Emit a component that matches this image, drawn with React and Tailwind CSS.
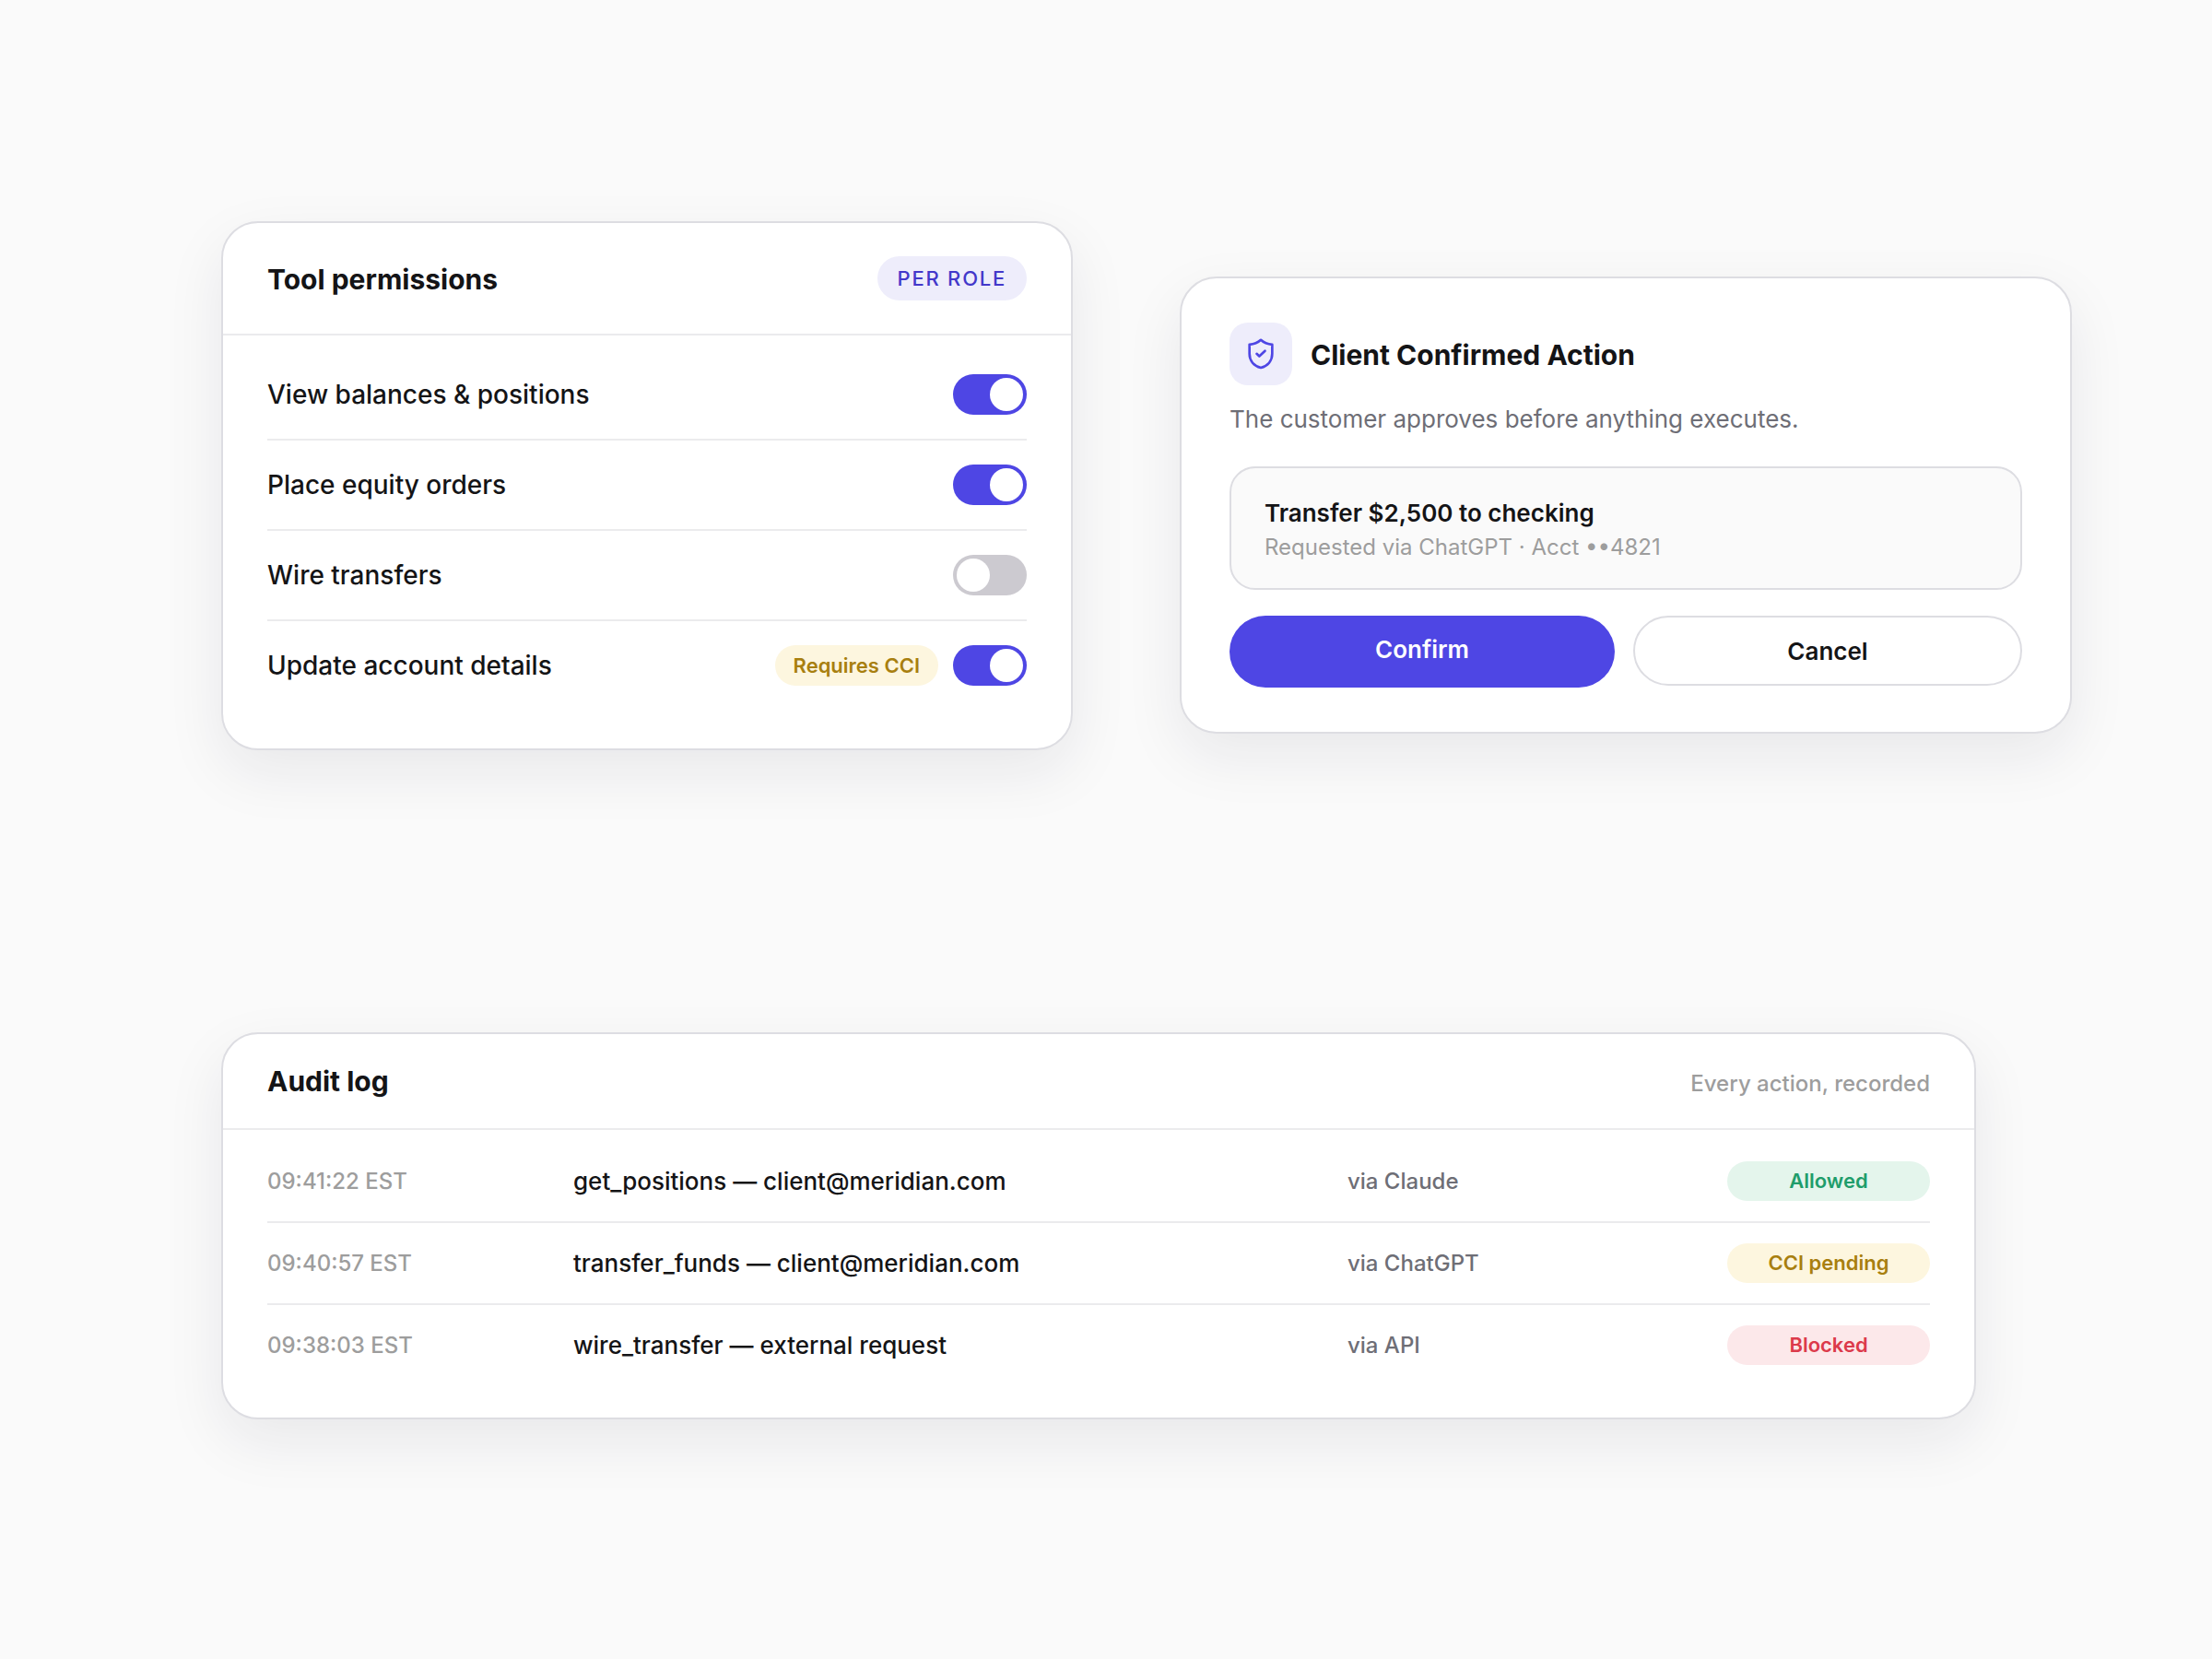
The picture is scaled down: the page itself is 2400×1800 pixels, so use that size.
import React, { useState } from 'react';

const CARD =
  'rounded-[40px] border-2 border-[#dddde2] bg-white shadow-[0_24px_64px_rgba(20,20,50,0.08)]';
const CARD_TITLE = 'pt-0.5 text-[30px] leading-9 font-bold';

const permissions = [
  { id: 'view-balances', name: 'View balances & positions', enabled: true },
  { id: 'equity-orders', name: 'Place equity orders', enabled: true },
  { id: 'wire-transfers', name: 'Wire transfers', enabled: false },
  { id: 'account-details', name: 'Update account details', enabled: true, note: 'Requires CCI' },
];

const auditEntries = [
  {
    time: '09:41:22 EST',
    action: 'get_positions — client@meridian.com',
    source: 'via Claude',
    status: 'Allowed',
  },
  {
    time: '09:40:57 EST',
    action: 'transfer_funds — client@meridian.com',
    source: 'via ChatGPT',
    status: 'CCI pending',
  },
  {
    time: '09:38:03 EST',
    action: 'wire_transfer — external request',
    source: 'via API',
    status: 'Blocked',
  },
];

const statusStyles = {
  Allowed: 'bg-[#e4f5ec] text-[#1f9d6b]',
  'CCI pending': 'bg-[#fdf6df] text-[#a87f0f]',
  Blocked: 'bg-[#fce8ea] text-[#dc3a4b]',
};

const ShieldIcon = () => (
  <svg
    viewBox="0 0 24 24"
    className="size-10"
    fill="none"
    stroke="currentColor"
    strokeWidth="1.6"
    strokeLinecap="round"
    strokeLinejoin="round"
    aria-hidden="true"
  >
    <path d="M12 2.900c1.900 1.800 4.300 2.800 7.400 3v6c0 4.600-2.900 7.900-7.400 9.100-4.500-1.200-7.400-4.500-7.400-9.100v-6c3.100-.2 5.500-1.200 7.400-3z" />
    <path d="M9.300 11.900l1.700 1.600 3.700-3.500" />
  </svg>
);

const ToolPermissions = () => {
  const [items, setItems] = useState(permissions);

  const toggle = (id) => {
    setItems(items.map((item) => (item.id === id ? { ...item, enabled: !item.enabled } : item)));
  };

  return (
    <section className={CARD}>
      <header className="flex items-center justify-between border-b-2 border-[#ebebed] px-12 py-9">
        <h2 className={CARD_TITLE}>Tool permissions</h2>
        <span className="rounded-full bg-[#eeedfb] px-[22px] text-[22px] leading-[48px] font-medium tracking-[0.08em] text-[#4338ca]">
          PER ROLE
        </span>
      </header>

      <ul className="px-12 pt-4 pb-[42px]">
        {items.map((item) => (
          <li
            key={item.id}
            className="flex items-center gap-4 border-b-2 border-[#ebebed] py-[26px] last:border-b-0"
          >
            <label htmlFor={item.id} className="flex-1 text-[28px] leading-[44px] font-medium">
              {item.name}
            </label>
            {item.note && (
              <span className="rounded-full bg-[#fdf6df] px-5 text-[22px] leading-[44px] font-semibold text-[#a87f0f]">
                {item.note}
              </span>
            )}
            <input
              id={item.id}
              type="checkbox"
              checked={item.enabled}
              onChange={() => toggle(item.id)}
              className="h-11 w-20 cursor-pointer appearance-none rounded-full bg-[#cccad0] p-1 before:block before:size-9 before:rounded-full before:bg-white checked:bg-[#4e46e4] checked:before:translate-x-9"
            />
          </li>
        ))}
      </ul>
    </section>
  );
};

const ConfirmAction = () => (
  <section className={`${CARD} mt-[60px] px-[52px] py-12`}>
    <div className="flex items-center gap-5">
      <div className="flex size-[68px] items-center justify-center rounded-[20px] bg-[#eeedfb] text-[#4e46e4]">
        <ShieldIcon />
      </div>
      <h2 className={CARD_TITLE}>Client Confirmed Action</h2>
    </div>
    <p className="mt-4 text-[26px] leading-[42px] text-[#6e6e76]">
      The customer approves before anything executes.
    </p>

    <div className="mt-[30px] rounded-[28px] border-2 border-[#dddde2] bg-[#fafafa] px-9 pt-[30px] pb-[26px]">
      <p className="text-[26px] leading-[38px] font-semibold">Transfer $2,500 to checking</p>
      <p className="text-2xl leading-9 text-[#9d9d9d]">Requested via ChatGPT · Acct ••4821</p>
    </div>

    {/* Actions */}
    <div className="mt-7 flex items-start gap-5">
      <button
        type="button"
        className="flex-1 cursor-pointer rounded-full bg-[#4e46e4] pt-[22px] pb-[26px] text-[26px] leading-[30px] font-semibold text-white"
      >
        Confirm
      </button>
      <button
        type="button"
        className="flex-1 cursor-pointer rounded-full border-2 border-[#dddde2] bg-white pt-[22px] pb-5 text-[26px] leading-[30px] font-semibold"
      >
        Cancel
      </button>
    </div>
  </section>
);

const AuditLog = () => (
  <section className={`${CARD} mt-[306px] mr-[104px]`}>
    <header className="flex items-baseline justify-between border-b-2 border-[#ebebed] px-12 pt-[31px] pb-[30px]">
      <h2 className={CARD_TITLE}>Audit log</h2>
      <p className="text-2xl leading-9 font-medium text-[#9d9d9d]">Every action, recorded</p>
    </header>

    <div className="px-12 pt-3 pb-[35px]">
      <table className="w-full table-fixed border-separate border-spacing-0">
        <colgroup>
          <col className="w-[332px]" />
          <col />
          <col className="w-[412px]" />
          <col className="w-[220px]" />
        </colgroup>
        <tbody className="[&>tr:not(:last-child)>td]:border-b-2 [&>tr>td]:border-[#ebebed] [&>tr>td]:py-[22px]">
          {auditEntries.map((entry) => (
            <tr key={entry.time}>
              <td className="text-2xl leading-9 font-medium text-[#9d9d9d]">{entry.time}</td>
              <td className="text-[26px] leading-9 font-medium">{entry.action}</td>
              <td className="text-2xl leading-9 font-medium text-[#6e6e76]">{entry.source}</td>
              <td>
                <span
                  className={`block rounded-full text-center text-[22px] leading-[43px] font-semibold ${statusStyles[entry.status]}`}
                >
                  {entry.status}
                </span>
              </td>
            </tr>
          ))}
        </tbody>
      </table>
    </div>
  </section>
);

const App = () => (
  <main className="min-h-screen bg-[#fafafa] pt-60 pr-[152px] pb-60 pl-60 font-['Inter',sans-serif] text-[#141416] antialiased">
    <div className="grid grid-cols-[924fr_968fr] items-start gap-[116px]">
      <ToolPermissions />
      <ConfirmAction />
    </div>
    <AuditLog />
  </main>
);

export default App;
